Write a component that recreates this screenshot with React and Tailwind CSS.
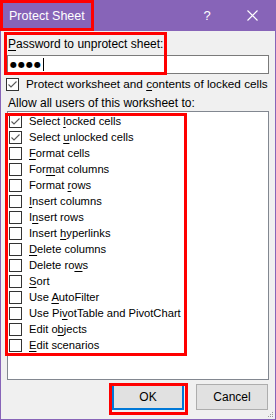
import React from "react";

const items = [
  ["Select ", "l", "ocked cells", true],
  ["Select ", "u", "nlocked cells", true],
  ["", "F", "ormat cells", false],
  ["For", "m", "at columns", false],
  ["Format ", "r", "ows", false],
  ["", "I", "nsert columns", false],
  ["I", "n", "sert rows", false],
  ["Insert ", "h", "yperlinks", false],
  ["", "D", "elete columns", false],
  ["Delete ro", "w", "s", false],
  ["", "S", "ort", false],
  ["Use ", "A", "utoFilter", false],
  ["Use Pi", "v", "otTable and PivotChart", false],
  ["Edit o", "b", "jects", false],
  ["", "E", "dit scenarios", false],
];

function Box({ checked, className = "" }) {
  return (
    <div className={"w-[13px] h-[13px] shrink-0 border border-[#333333] bg-white flex items-center justify-center " + className}>
      {checked && (
        <svg width="11" height="11" viewBox="0 0 11 11">
          <polyline points="1.5,5.5 4,8 9.5,2.5" fill="none" stroke="#5a5a5a" strokeWidth="1.1" />
        </svg>
      )}
    </div>
  );
}

function U({ children }) {
  return <span className="underline underline-offset-[2px] decoration-[1px]">{children}</span>;
}

export default function App() {
  return (
    <div className="relative w-[276px] h-[420px] flex flex-col bg-[#f0f0f0] font-['Liberation_Sans',Arial,sans-serif] text-[12px] text-black leading-[16px]">
      <div className="h-[31px] shrink-0 bg-[#8764b8] flex items-stretch text-white">
        <div className="w-[94px] border-[3px] border-[#ff0000] flex items-center pl-[6px] text-[12.5px] whitespace-nowrap">Protect Sheet</div>
        <div className="flex-1" />
        <div className="w-[30px] flex items-center justify-center text-[13px] mr-[15px]">?</div>
        <div className="w-[30px] flex items-center justify-center mr-[9px]">
          <svg width="11" height="11" viewBox="0 0 11 11">
            <path d="M0.5 0.5 L10.5 10.5 M10.5 0.5 L0.5 10.5" stroke="white" strokeWidth="1.1" />
          </svg>
        </div>
      </div>
      <div className="flex-1 flex flex-col border-x border-b border-[#8764b8] px-[6px]">
        <div className="mt-[5px] pl-[1px] h-[16px] whitespace-nowrap"><U>P</U>assword to unprotect sheet:</div>
        <div className="mt-[3px] h-[19px] bg-white border border-[#7a7a7a] flex items-center pl-[2px]">
          <span className="font-['DejaVu_Sans',sans-serif] text-[8px] tracking-[1px] leading-none">●●●●</span>
          <span className="w-px h-[13px] bg-black ml-px" />
        </div>
        <div className="mt-[2px] h-[16px] flex items-center -ml-px">
          <Box checked />
          <span className="ml-[7px] whitespace-nowrap text-[11.75px]">Protect worksheet and <U>c</U>ontents of locked cells</span>
        </div>
        <div className="mt-[3px] pl-[1px] h-[16px] whitespace-nowrap">Allow all users of this worksheet to:</div>
        <div className="h-[269px] bg-white border border-[#828790] pt-[1px]">
          {items.map(([a, k, b, c], i) => (
            <div key={i} className="h-[16px] flex items-center pl-[1px]">
              <Box checked={c} />
              <span className="ml-[7px] whitespace-nowrap text-[11.2px]">{a}<U>{k}</U>{b}</span>
            </div>
          ))}
        </div>
        <div className="mt-[4px] flex justify-end gap-[12px] pr-px">
          <button className="w-[72px] h-[26px] bg-[#e1e1e1] border-2 border-[#0078d7] flex items-center justify-center">OK</button>
          <button className="w-[72px] h-[26px] bg-[#e1e1e1] border border-[#adadad] flex items-center justify-center">Cancel</button>
        </div>
      </div>
      <svg className="absolute right-[2px] bottom-[2px]" width="7" height="7" viewBox="0 0 7 7">
        <rect x="5" y="1" width="1" height="1" fill="#9a9a9a" />
        <rect x="3" y="3" width="1" height="1" fill="#9a9a9a" />
        <rect x="5" y="3" width="1" height="1" fill="#9a9a9a" />
        <rect x="1" y="5" width="1" height="1" fill="#9a9a9a" />
        <rect x="3" y="5" width="1" height="1" fill="#9a9a9a" />
        <rect x="5" y="5" width="1" height="1" fill="#9a9a9a" />
      </svg>
      <div className="absolute left-[4px] top-[32px] w-[163px] h-[43px] border-[3px] border-[#ff0000] pointer-events-none" />
      <div className="absolute left-[5px] top-[113px] w-[182px] h-[243px] border-[3px] border-[#ff0000] pointer-events-none" />
      <div className="absolute left-[109px] top-[383px] w-[79px] h-[32px] border-[3px] border-[#ff0000] pointer-events-none" />
    </div>
  );
}
